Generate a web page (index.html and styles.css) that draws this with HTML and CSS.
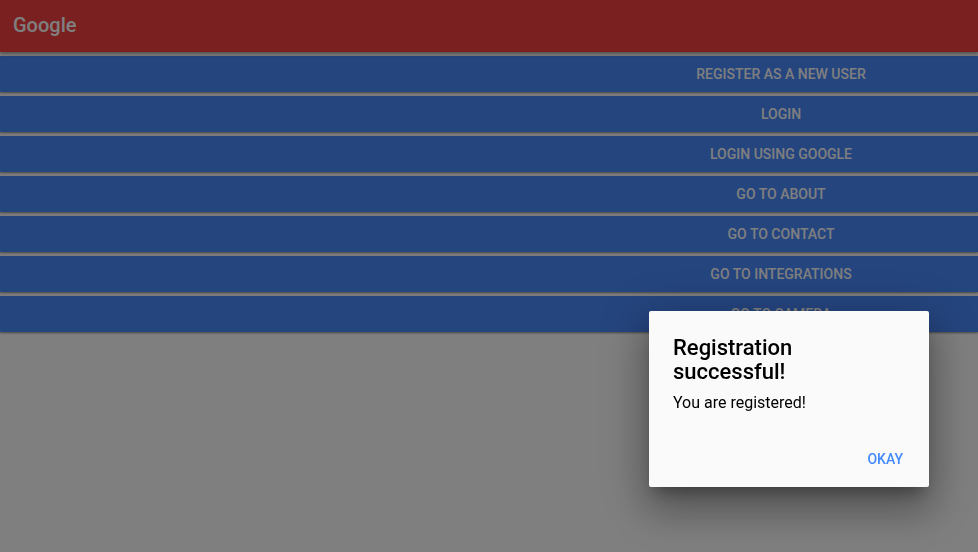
FILE: index.html
```html
<!DOCTYPE html>
<html>
<head>
<meta charset="utf-8">
<link rel="stylesheet" href="styles.css">
</head>
<body>
<div class="app">
  <header class="appbar"><span class="appbar-title">Google</span></header>
  <nav class="menu">
    <button class="menu-btn">Register as a new user</button>
    <button class="menu-btn">Login</button>
    <button class="menu-btn">Login using Google</button>
    <button class="menu-btn">Go to About</button>
    <button class="menu-btn">Go to Contact</button>
    <button class="menu-btn">Go to Integrations</button>
    <button class="menu-btn">Go to Camera</button>
  </nav>
</div>
<div class="overlay"></div>
<div class="dialog" role="dialog">
  <h2 class="dialog-title">Registration successful!</h2>
  <p class="dialog-body">You are registered!</p>
  <div class="dialog-actions"><button class="dialog-btn">Okay</button></div>
</div>
</body>
</html>
```
FILE: styles.css
```css
html, body {
  margin: 0;
  padding: 0;
  background: #ffffff;
  font-family: Roboto, "Noto Sans", "Liberation Sans", sans-serif;
  width: 978px;
  height: 552px;
  overflow: hidden;
}
.app {
  display: flex;
  flex-direction: column;
}
.appbar {
  height: 52px;
  background: #f64040;
  display: flex;
  align-items: center;
  padding-left: 13px;
  padding-bottom: 2px;
  box-sizing: border-box;
  box-shadow: 0 2px 3px rgba(0,0,0,0.35);
  position: relative;
  z-index: 1;
}
.appbar-title {
  color: #ffffff;
  font-size: 20px;
  font-weight: 500;
}
.menu {
  display: flex;
  flex-direction: column;
  gap: 4px;
  padding-top: 4px;
}
.menu-btn {
  height: 36px;
  border: 0;
  margin: 0;
  background: #4a8aff;
  color: #ffffff;
  font-family: inherit;
  font-size: 14px;
  font-weight: 500;
  text-transform: uppercase;
  padding: 0 0 0 584px;
  text-align: center;
  box-shadow: 0 1px 2px rgba(0,0,0,0.45);
}
.overlay {
  position: fixed;
  inset: 0;
  background: rgba(0,0,0,0.5);
  z-index: 5;
}
.dialog {
  position: absolute;
  z-index: 6;
  left: 649px;
  top: 311px;
  width: 280px;
  height: 176px;
  box-sizing: border-box;
  background: #fafafa;
  border-radius: 2px;
  padding: 25px 0 0 24px;
  display: flex;
  flex-direction: column;
  box-shadow: 0 11px 15px -7px rgba(0,0,0,0.35), 0 24px 38px 3px rgba(0,0,0,0.22), 0 9px 46px 8px rgba(0,0,0,0.16);
}
.dialog-title {
  margin: 0;
  font-size: 22px;
  font-weight: 500;
  line-height: 24px;
  color: #000000;
  width: 200px;
}
.dialog-body {
  margin: 9px 0 0;
  font-size: 16px;
  line-height: 20px;
  color: #000000;
}
.dialog-actions {
  margin-top: auto;
  display: flex;
  justify-content: flex-end;
  padding: 0 26px 18px 0;
}
.dialog-btn {
  border: 0;
  background: transparent;
  padding: 0;
  font-family: inherit;
  font-size: 14px;
  font-weight: 500;
  text-transform: uppercase;
  color: #448aff;
  line-height: 20px;
}
```
